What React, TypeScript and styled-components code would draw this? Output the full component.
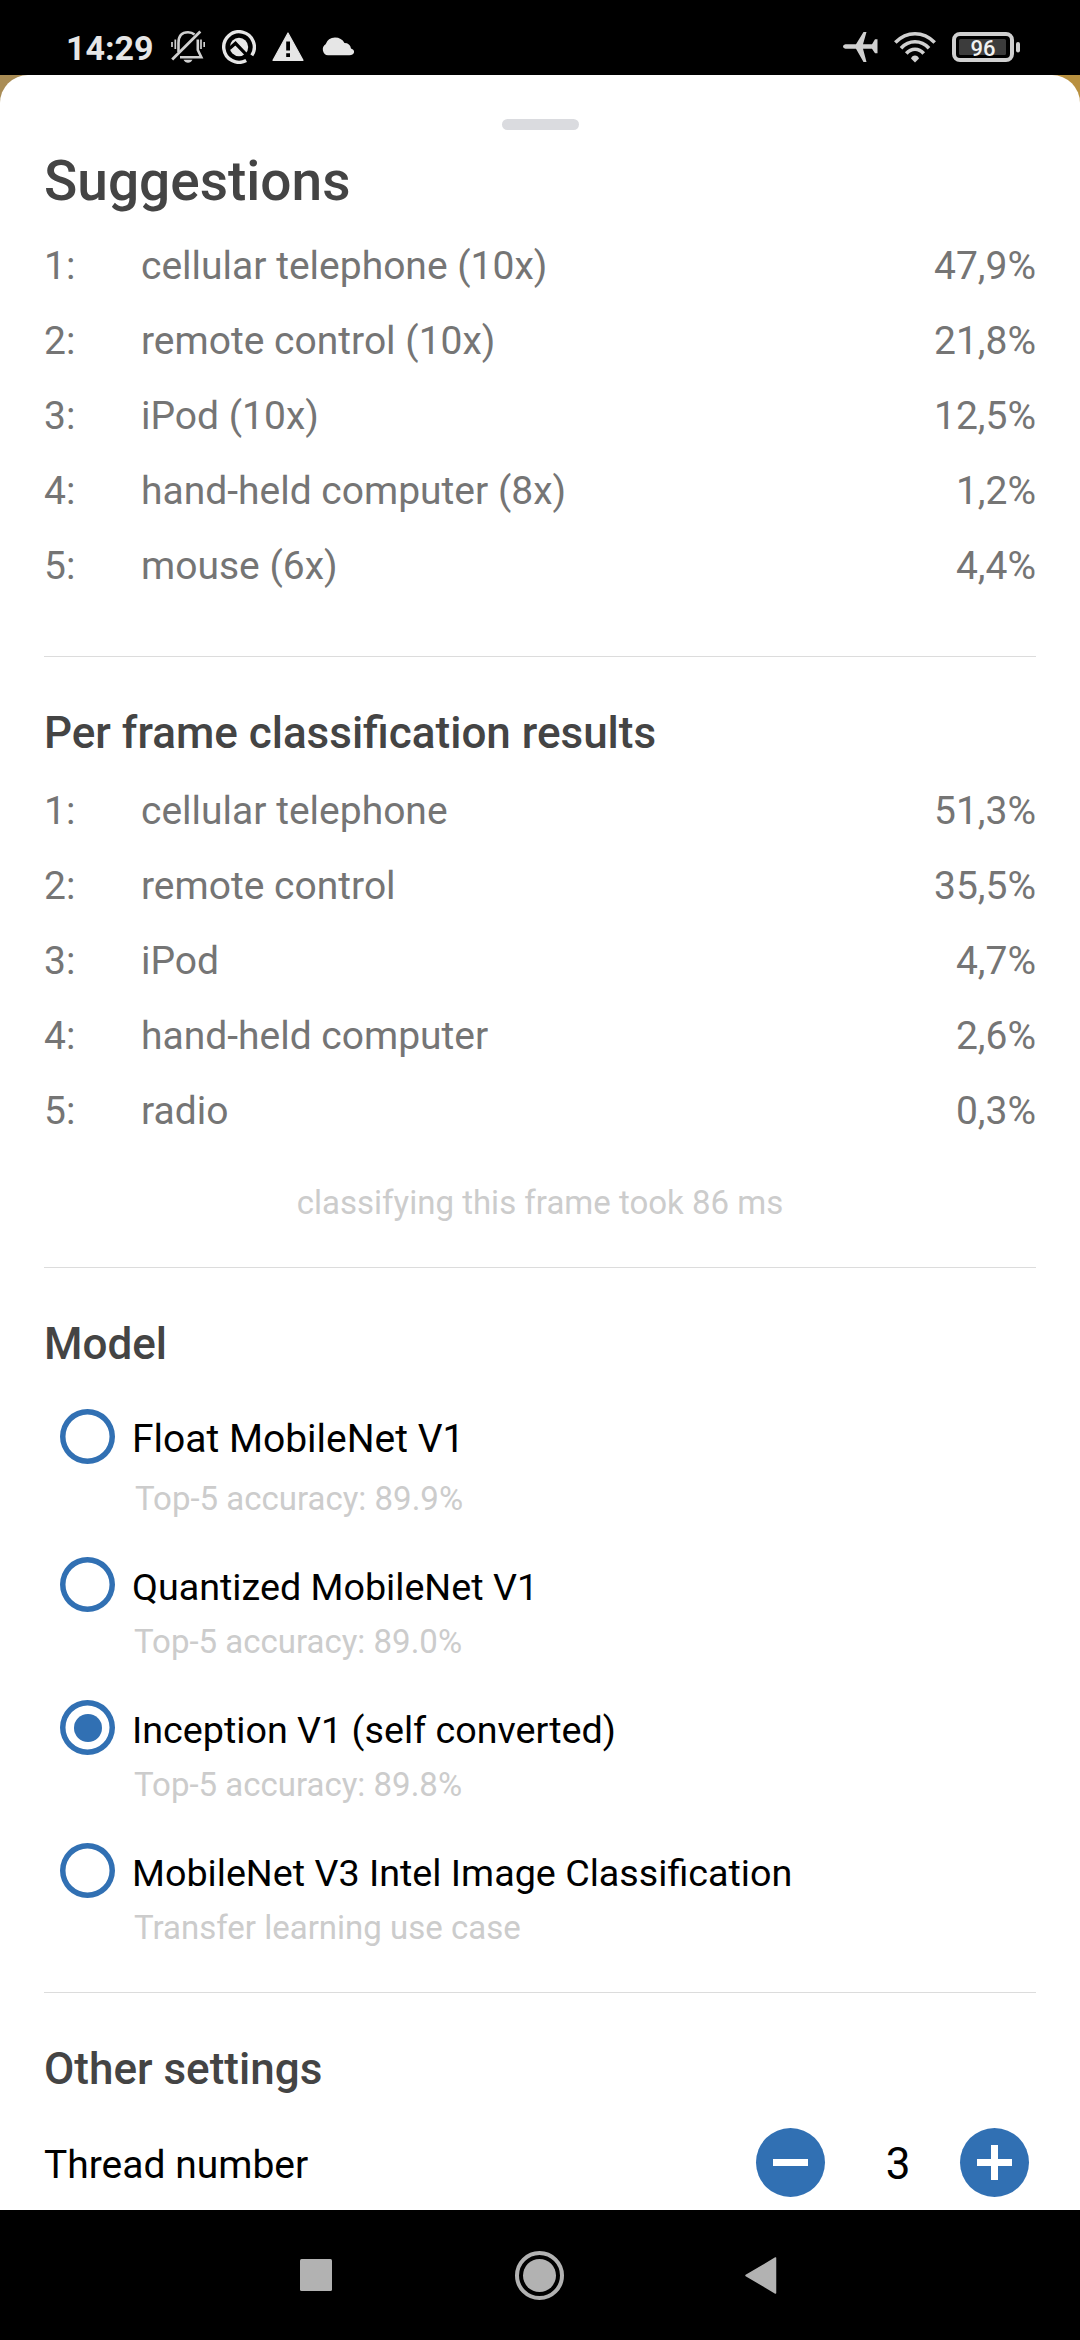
import React from "react";
import styled, { createGlobalStyle } from "styled-components";

const Global = createGlobalStyle`
  * { box-sizing: border-box; }
  html, body { margin: 0; padding: 0; background: #000; }
`;

const Screen = styled.div`
  width: 1080px;
  height: 2340px;
  display: flex;
  flex-direction: column;
  overflow: hidden;
  font-family: Roboto, "Noto Sans", sans-serif;
  background: #000;
`;

const StatusBar = styled.header`
  height: 75px;
  flex: none;
  display: flex;
  justify-content: space-between;
  align-items: center;
  padding: 19px 60px 0 66px;
  color: #e6e6e6;
`;

const Cluster = styled.div<{ $gap: number }>`
  display: flex;
  align-items: center;
  gap: ${(p) => p.$gap}px;
`;

const Clock = styled.span`
  width: 88px;
  padding-top: 2px;
  font-size: 34px;
  line-height: 40px;
  font-weight: 700;
`;

const Backdrop = styled.main`
  height: 2135px;
  flex: none;
  background: linear-gradient(90deg, #a98c55 0, #a98c55 50%, #b8903f 50%);
`;

const Sheet = styled.div`
  height: 100%;
  display: flex;
  flex-direction: column;
  padding: 44px 44px 0;
  background: #fff;
  border-radius: 28px 28px 0 0;
`;

const Grip = styled.div`
  width: 77px;
  height: 11px;
  flex: none;
  margin: 0 auto;
  border-radius: 6px;
  background: #dadbdf;
`;

const Title = styled.h1`
  margin: 18px 0 0;
  height: 66px;
  font-size: 55px;
  line-height: 66px;
  font-weight: 500;
  color: #444;
`;

const TopSection = styled.section`
  height: 526px;
  flex: none;
`;

const Section = styled.section<{ $height: number }>`
  height: ${(p) => p.$height}px;
  flex: none;
  border-top: 1px solid #dcdcdc;
`;

const Heading = styled.h2`
  margin: 50px 0 0;
  height: 52px;
  font-size: 44px;
  line-height: 52px;
  font-weight: 500;
  color: #444;
`;

const List = styled.ol`
  list-style: none;
  margin: 14px 0 0;
  padding: 0;
`;

const Result = styled.li`
  display: grid;
  grid-template-columns: 97px 1fr auto;
  align-items: center;
  height: 75px;
  font-size: 39px;
  line-height: 46px;
  color: #757575;
`;

const Timing = styled.p`
  margin: 35px 0 0;
  text-align: center;
  font-size: 33px;
  line-height: 40px;
  color: #ccc;
`;

const Options = styled.div`
  display: flex;
  flex-direction: column;
  margin-top: 39px;
  padding-left: 16px;
`;

const Option = styled.div<{ $height: number }>`
  display: grid;
  grid-template-columns: 56px 1fr;
  column-gap: 16px;
  align-content: start;
  height: ${(p) => p.$height}px;
`;

const Radio = styled.span`
  display: grid;
  place-items: center;
  width: 55px;
  height: 55px;
  border-radius: 50%;
  box-shadow: inset 0 0 0 5.5px #3170b3;
`;

const Dot = styled.span`
  width: 28px;
  height: 28px;
  border-radius: 50%;
  background: #3170b3;
`;

const OptionName = styled.span<{ $size: number }>`
  height: 56px;
  padding-top: 7px;
  font-size: ${(p) => p.$size}px;
  line-height: 46px;
  color: #000;
`;

const OptionNote = styled.span<{ $top: number; $indent: number }>`
  grid-column: 2;
  margin-top: ${(p) => p.$top}px;
  padding-left: ${(p) => p.$indent}px;
  font-size: 33px;
  line-height: 40px;
  color: #ccc;
`;

const Setting = styled.div`
  display: flex;
  align-items: center;
  margin-top: 33px;
  height: 69px;
  padding-right: 7px;
  font-size: 39px;
  line-height: 46px;
  color: #000;
`;

const SettingName = styled.span`
  flex: 1;
  padding-top: 4px;
`;

const Count = styled.span`
  width: 135px;
  padding: 2px 0 0 11px;
  text-align: center;
  font-size: 44px;
`;

const RoundButton = styled.button`
  width: 69px;
  height: 69px;
  padding: 0;
  border: 0;
  border-radius: 50%;
  background: #3170b3;
  display: grid;
  place-items: center;
`;

const NavBar = styled.nav`
  flex: 1;
  display: flex;
  align-items: center;
  padding-left: 300px;
`;

const HomeKey = styled.svg`
  margin: 0 181px 0 183px;
`;

const suggestions = [
  ["cellular telephone (10x)", "47,9%"],
  ["remote control (10x)", "21,8%"],
  ["iPod (10x)", "12,5%"],
  ["hand-held computer (8x)", "1,2%"],
  ["mouse (6x)", "4,4%"],
];

const frameResults = [
  ["cellular telephone", "51,3%"],
  ["remote control", "35,5%"],
  ["iPod", "4,7%"],
  ["hand-held computer", "2,6%"],
  ["radio", "0,3%"],
];

const models = [
  { name: "Float MobileNet V1", note: "Top-5 accuracy: 89.9%", size: 39, height: 148, top: 14, indent: 3 },
  { name: "Quantized MobileNet V1", note: "Top-5 accuracy: 89.0%", size: 37.7, height: 143, top: 9, indent: 2 },
  { name: "Inception V1 (self converted)", note: "Top-5 accuracy: 89.8%", size: 37.7, height: 143, top: 9, indent: 2, selected: true },
  { name: "MobileNet V3 Intel Image Classification", note: "Transfer learning use case", size: 37.7, height: 143, top: 9, indent: 2 },
];

const Results = ({ rows }: { rows: string[][] }) => (
  <List>
    {rows.map(([name, score], i) => (
      <Result key={name}>
        <span>{i + 1}:</span>
        <span>{name}</span>
        <span>{score}</span>
      </Result>
    ))}
  </List>
);

const SilentBell = () => (
  <svg width="34" height="34" viewBox="0 0 34 34" fill="none" stroke="#d0d0d0" strokeWidth="2.6">
    <path d="M7.5 22V13Q7.5 2.300 17 2.300Q21 2.300 23.500 4.500M26.800 9.500V20L30.300 27.200H9" />
    <path d="M1.200 29.500L29.300 1.500" strokeWidth="2.800" />
    <path d="M1 12v5M4.300 9.500v9.500M30 9.500v9.500M33.200 12v5" strokeWidth="1.700" />
    <path d="M12.500 29.800h9q-1.500 3-4.500 3t-4.500-3Z" fill="#d0d0d0" stroke="none" />
  </svg>
);

const SearchBadge = () => (
  <svg width="34" height="34" viewBox="0 0 34 34" fill="none">
    <path d="M24.200 30.500A15.300 15.300 0 1 1 29.800 25.400" stroke="#e6e6e6" strokeWidth="3.400" />
    <circle cx="17" cy="17" r="9.200" fill="#e6e6e6" />
    <path d="M7.500 18.500L13.500 13.300L28.500 29" stroke="#000" strokeWidth="3.200" />
  </svg>
);

const Warning = () => (
  <svg width="32" height="30" viewBox="0 0 32 30">
    <path d="M16 1L31 28.3H1Z" fill="#e6e6e6" stroke="#e6e6e6" strokeWidth="1.2" strokeLinejoin="round" />
    <path d="M14.200 9.500h3.800v9h-3.800zM14.200 21.300h3.800v3.800h-3.800z" fill="#000" />
  </svg>
);

const Cloud = () => (
  <svg width="34" height="20" viewBox="0 0 34 20">
    <path d="M7 18.300A6 6 0 0 1 4.600 7.300Q7 .5 14 .5Q20.500 .5 23.500 6Q29 6 30 11.500Q33.500 12.500 33 15.500Q32 18.300 28.500 18.300Z" fill="#e6e6e6" />
  </svg>
);

const Plane = () => (
  <svg width="36" height="32" viewBox="0 0 36 32">
    <path d="M3.500 13.300H14L21.500 1H24.500L21 13.300H30L33 8.300H35.500V22.300H33L30 17.700H21L24.500 31H21.500L14 17.700H3.500Q1 17.500 1 15.500T3.500 13.300Z" fill="#d0d0d0" />
  </svg>
);

const Wifi = () => (
  <svg width="42" height="31" viewBox="0 0 42 31" fill="none" stroke="#d0d0d0" strokeWidth="3.600">
    <path d="M1.300 10.500Q10 1.800 21 1.800T40.700 10.500" />
    <path d="M7 16.200Q13 9.800 21 9.800T35 16.200" />
    <path d="M12.300 21.500Q16 17.200 21 17.200T29.700 21.500" />
    <path d="M21 30.500L17 26.500Q18 23.600 21 23.600T25 26.500Z" fill="#d0d0d0" stroke="none" />
  </svg>
);

const Battery = () => (
  <svg width="68" height="30" viewBox="0 0 68 30">
    <rect x="2" y="2" width="58" height="26" rx="6" fill="none" stroke="#d0d0d0" strokeWidth="4" />
    <rect x="7" y="7" width="47" height="16" rx="1.500" fill="#3c3c3c" />
    <rect x="64" y="10" width="4" height="10.500" rx="2" fill="#d0d0d0" />
    <text x="31" y="23.600" textAnchor="middle" fontSize="22" fontWeight="500" fill="#f2f2f2">96</text>
  </svg>
);

export default function App() {
  return (
    <Screen>
      <Global />
      <StatusBar>
        <Cluster $gap={16.8}>
          <Clock>14:29</Clock>
          <SilentBell />
          <SearchBadge />
          <Warning />
          <Cloud />
        </Cluster>
        <Cluster $gap={16}>
          <Plane />
          <Wifi />
          <Battery />
        </Cluster>
      </StatusBar>
      <Backdrop>
        <Sheet>
          <Grip />
          <TopSection>
            <Title>Suggestions</Title>
            <Results rows={suggestions} />
          </TopSection>
          <Section $height={611}>
            <Heading>Per frame classification results</Heading>
            <Results rows={frameResults} />
            <Timing>classifying this frame took 86 ms</Timing>
          </Section>
          <Section $height={725}>
            <Heading>Model</Heading>
            <Options>
              {models.map((m) => (
                <Option key={m.name} $height={m.height}>
                  <Radio>{m.selected && <Dot />}</Radio>
                  <OptionName $size={m.size}>{m.name}</OptionName>
                  <OptionNote $top={m.top} $indent={m.indent}>{m.note}</OptionNote>
                </Option>
              ))}
            </Options>
          </Section>
          <Section $height={217}>
            <Heading>Other settings</Heading>
            <Setting>
              <SettingName>Thread number</SettingName>
              <RoundButton aria-label="Decrease">
                <svg width="35" height="35" viewBox="0 0 35 35"><path d="M0 14h35v7H0z" fill="#fff" /></svg>
              </RoundButton>
              <Count>3</Count>
              <RoundButton aria-label="Increase">
                <svg width="35" height="35" viewBox="0 0 35 35"><path d="M0 14h14V0h7v14h14v7H21v14h-7V21H0z" fill="#fff" /></svg>
              </RoundButton>
            </Setting>
          </Section>
        </Sheet>
      </Backdrop>
      <NavBar>
        <svg width="32" height="32" viewBox="0 0 32 32"><rect width="32" height="32" rx="1.500" fill="#b2b2b2" /></svg>
        <HomeKey width="49" height="49" viewBox="0 0 49 49">
          <circle cx="24.500" cy="24.500" r="22.500" fill="none" stroke="#b2b2b2" strokeWidth="4" />
          <circle cx="24.500" cy="24.500" r="16.500" fill="#b2b2b2" />
        </HomeKey>
        <svg width="32" height="37" viewBox="0 0 32 37"><path d="M1 18.500L30.500 1V36Z" fill="#b2b2b2" stroke="#b2b2b2" strokeWidth="1.500" strokeLinejoin="round" /></svg>
      </NavBar>
    </Screen>
  );
}
